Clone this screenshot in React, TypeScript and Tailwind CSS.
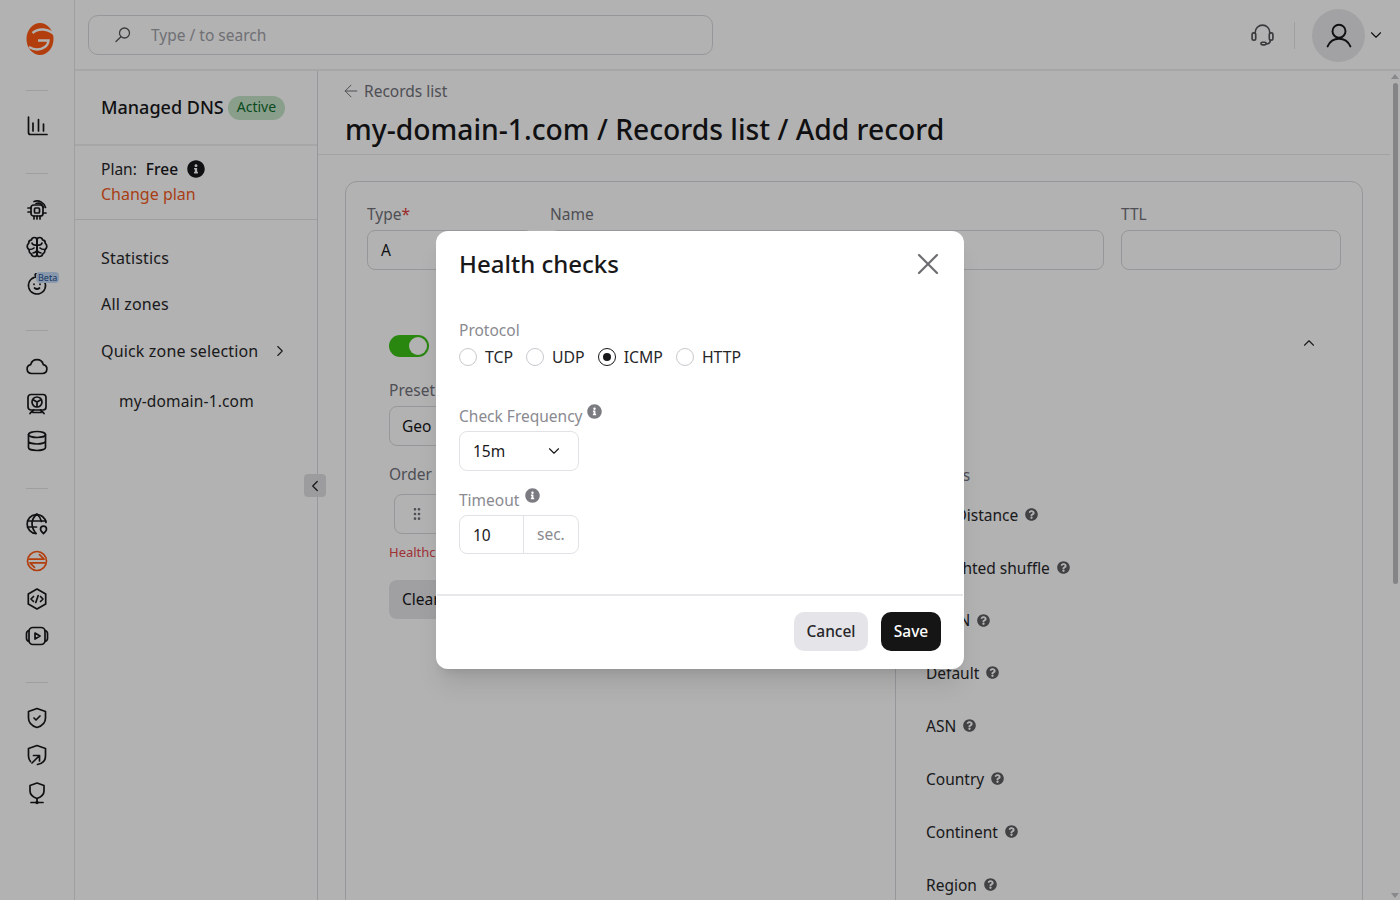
import type { ReactNode } from "react";
import { ArrowLeft, ChevronDown, ChevronLeft, ChevronRight, ChevronUp, GripVertical, X } from "lucide-react";
import { FaInfoCircle, FaQuestionCircle } from "react-icons/fa";

// 24x24 outline used by every rail icon
function RailIcon({ children, active }: { children: ReactNode; active?: boolean }) {
  return (
    <div className={`h-[37.5px] pt-px flex items-center justify-center ${active ? "text-[#ff5a14]" : "text-[#18181b]"}`}>
      <svg viewBox="0 0 24 24" className="w-6 h-6" fill="none" stroke="currentColor" strokeWidth="1.7" strokeLinecap="round" strokeLinejoin="round">
        {children}
      </svg>
    </div>
  );
}

function RailDivider({ className }: { className: string }) {
  return <div className={`w-[22px] h-px bg-[#e4e4e7] ${className}`}></div>;
}

function Logo() {
  return (
    <svg viewBox="0 0 28 32" className="w-7 h-8 mt-[23px] ml-[5px]">
      <ellipse cx="14" cy="16" rx="13.500" ry="16" fill="#ff5a14" />
      <path fill="none" stroke="#ffffff" strokeWidth="2.400" d="M29 12C22 5 12 5 6.500 10" />
      <path fill="none" stroke="#ffffff" strokeWidth="2.400" d="M12 17.500H22.500C22 23 17 26.500 11 26.500 8 26.500 5.500 25.500 3 24" />
    </svg>
  );
}

function QuestionItem({ label }: { label: string }) {
  return (
    <div className="h-[52.85px] flex items-center gap-[7px] text-[15.5px] text-[#27272a]">
      <span>{label}</span>
      <FaQuestionCircle className="w-[13px] h-[13px] text-[#5f5f64] -mt-0.5" />
    </div>
  );
}

function Radio({ label, checked }: { label: string; checked?: boolean }) {
  return (
    <div className="flex items-center gap-2">
      <span className={`w-[18px] h-[18px] rounded-full border flex items-center justify-center ${checked ? "border-[#18181b]" : "border-[#c9c9ce]"}`}>
        {checked && <span className="w-2 h-2 rounded-full bg-[#18181b]"></span>}
      </span>
      <span className="text-[15.8px] leading-5 text-[#27272a]">{label}</span>
    </div>
  );
}

export default function App() {
  return (
    <div className="relative w-full h-screen flex overflow-hidden bg-white text-[#18181b] font-['Noto_Sans',sans-serif]">
      {/* Left icon rail */}
      <aside className="w-[75px] shrink-0 border-r border-[#e4e4e7] flex flex-col items-center">
        <Logo />
        <RailDivider className="mt-[35px]" />
        <div className="mt-4 w-full">
          <RailIcon>
            <path d="M3.500 3v15.500a2 2 0 0 0 2 2H22" />
            <path d="M8 9v8M13.500 5.500V17M18.500 10v7" />
          </RailIcon>
        </div>
        <RailDivider className="mt-[28px]" />
        <div className="mt-[17px] w-full">
          <RailIcon>
            <rect x="6" y="7" width="12" height="11" rx="2.500" />
            <rect x="9.500" y="10" width="5" height="5" rx="1" />
            <path d="M3 10h3M3 14h3M18 15h3M9 18v3M12 18v3M15 18v3M9 3.500c5-2 10 1 11.500 6M11 5.500c3-1 6 .5 7.500 4" />
          </RailIcon>
          <RailIcon>
            <path d="M12 5C12 3.300 10.700 2.500 9.300 2.500 7.800 2.500 6.700 3.500 6.500 4.800 4.800 5 3.600 6.400 3.800 8.200 2.500 9.300 2 10.600 2.300 12c.2 1.300 1 2.300 1.900 2.800-.3 1.700.3 3.200 1.900 4 .5 1.700 1.800 2.700 3.400 2.700 1.500 0 2.500-1 2.500-2.500z" />
            <path d="M12 5C12 3.300 13.300 2.500 14.700 2.500 16.200 2.500 17.300 3.500 17.500 4.800 19.200 5 20.400 6.400 20.200 8.200 21.500 9.300 22 10.600 21.700 12c-.2 1.300-1 2.300-1.900 2.800.3 1.700-.3 3.200-1.900 4-.5 1.700-1.800 2.700-3.400 2.700-1.500 0-2.500-1-2.500-2.500z" />
            <path d="M12 5v14.500M7 8c.5 1.500 2.500 2.500 5 2M17 8c-.5 1.500-2.500 2.500-5 2M4.500 14.500c2.500 0 4-1 4.500-1.500M19.500 14.500c-2.500 0-4-1-4.500-1.500M8 18c1.500-.2 3-1 4-2.500M16 18c-1.500-.2-3-1-4-2.500" />
          </RailIcon>
          <div className="relative">
            <RailIcon>
              <g transform="translate(0 -1.500)">
                <circle cx="12" cy="14" r="8.500" strokeDasharray="3 1.200" />
                <path d="M12 5.500C9.500 5 9.500 2 12 2" />
                <path d="M9 12.500v.5M15 12.500v.5M9.500 16.500c1.500 1.200 3.500 1.200 5 0" />
              </g>
            </RailIcon>
            <span className="absolute left-[36px] top-[6px] h-[11px] px-[2px] rounded-[4px] bg-[#c5dcf5] text-[#1d4f91] text-[9px] leading-[11px]">Beta</span>
          </div>
        </div>
        <RailDivider className="mt-[27px]" />
        <div className="mt-4 w-full">
          <RailIcon>
            <path d="M6.500 19.500a4.500 4.500 0 0 1-.8-8.900 6.500 6.500 0 0 1 12.600 0 4.500 4.500 0 0 1-.8 8.900z" />
          </RailIcon>
          <RailIcon>
            <rect x="3" y="2.500" width="18" height="15.500" rx="3" />
            <circle cx="12" cy="10" r="5" />
            <path d="M12 10l-3.500-2M12 10l3.500-2M12 10v4.500" />
            <path d="M5 21.500c1.500-2 3-2.500 3.500-3.500M19 21.500c-1.500-2-3-2.500-3.500-3.500M8 20.500h8" />
          </RailIcon>
          <RailIcon>
            <ellipse cx="12" cy="5.500" rx="8.500" ry="3" />
            <path d="M3.500 5.500v13c0 1.700 3.800 3 8.500 3s8.500-1.300 8.500-3v-13M3.500 12c0 1.700 3.800 3 8.500 3s8.500-1.300 8.500-3" />
          </RailIcon>
        </div>
        <RailDivider className="mt-[28px]" />
        <div className="mt-4 w-full">
          <RailIcon>
            <path d="M21 10.500A9.500 9.500 0 1 0 11 21.500" />
            <path d="M2.500 9h18.500M2.500 15h9M12 2c-3.500 3-5 6-5 9.500s1.500 7 4 10M12 2c2.500 2.500 4 5 4.500 7.500" />
            <path d="M18.500 21.500c-2-1.800-3-3-3-4.300a3 3 0 0 1 6 0c0 1.300-1 2.500-3 4.300z" />
          </RailIcon>
          <RailIcon active>
            <circle cx="12" cy="12" r="9.500" />
            <path d="M4 10.200h15l-4.500-4.500M20 13.800H5l4.500 4.500" />
          </RailIcon>
          <RailIcon>
            <path d="M12 2l8.700 5v10L12 22l-8.700-5V7z" />
            <path d="M8.500 9.500L6 12l2.500 2.500M15.500 9.500L18 12l-2.500 2.500M13.200 8.500l-2.400 7" />
          </RailIcon>
          <RailIcon>
            <rect x="4" y="3.500" width="16" height="17" rx="4" />
            <path d="M4 6.500c-1.500.5-2.500 1.500-2.500 3v5c0 1.500 1 2.500 2.500 3M20 6.500c1.500.5 2.500 1.500 2.500 3v5c0 1.500-1 2.500-2.500 3" />
            <path d="M10 9l5 3-5 3z" />
          </RailIcon>
        </div>
        <RailDivider className="mt-[27px]" />
        <div className="mt-4 w-full">
          <RailIcon>
            <path d="M12 2.500l8.500 3v6.500c0 5-3.500 8-8.500 9.500-5-1.500-8.500-4.500-8.500-9.500V5.500z" />
            <path d="M9 12l2 2 4-4" />
          </RailIcon>
          <RailIcon>
            <path d="M5.500 18.500C4 16.800 3.500 15 3.500 13V5.500l8.500-3 8.500 3V13c0 4.500-3 7.500-8 8.500" />
            <path d="M7 20l7-7M8.500 12.500H14.500V18" />
          </RailIcon>
          <RailIcon>
            <path d="M12 2l7 2.500V10c0 3.500-3 6-7 7.500C8 16 5 13.500 5 10V4.500z" />
            <path d="M12 17.500V21.500M6 21.500h12" />
            <circle cx="12" cy="21.500" r=".8" />
          </RailIcon>
        </div>
      </aside>

      <div className="flex-1 min-w-0 flex flex-col">
        {/* Top bar */}
        <header className="h-[71px] shrink-0 border-b-2 border-[#eeeeef] flex items-center pl-[13px] pt-px">
          <div className="w-[625px] h-10 rounded-[10px] border border-[#d9d9de] flex items-center pl-[24px]">
            <svg viewBox="0 0 20 20" className="w-5 h-5 text-[#55555a]" fill="none" stroke="currentColor" strokeWidth="1.3" strokeLinecap="round">
              <circle cx="11.500" cy="8" r="5" />
              <path d="M8 11.800L3 16.500" />
            </svg>
            <span className="ml-[18px] mt-[2px] text-[15.5px] text-[#a1a1a8]">Type / to search</span>
          </div>
          <div className="ml-auto flex items-center">
            <svg viewBox="0 0 24 24" className="w-[25px] h-[25px] text-[#55555a]" fill="none" stroke="currentColor" strokeWidth="1.6" strokeLinecap="round" strokeLinejoin="round">
              <path d="M5 10V9a7 7 0 0 1 14 0v1" />
              <rect x="2" y="9.500" width="3.500" height="7" rx="1.500" />
              <rect x="18.500" y="9.500" width="3.500" height="7" rx="1.500" />
              <path d="M19.500 16.500c0 2-1.500 3.500-4 3.500" />
              <rect x="10.500" y="18.500" width="5" height="2.500" rx="1.250" />
            </svg>
            <div className="w-px h-[27px] bg-[#e4e4e7] ml-[19px]"></div>
            <div className="ml-[17px] w-[53px] h-[53px] rounded-full bg-[#e9e9ec] flex items-center justify-center">
              <svg viewBox="0 0 24 24" className="w-[26px] h-[26px] text-[#18181b]" fill="none" stroke="currentColor" strokeWidth="1.8" strokeLinecap="round">
                <circle cx="12" cy="8.500" r="6" />
                <path d="M1.500 22.500c2-4.500 5.500-7 10.500-7s8.500 2.500 10.500 7" />
              </svg>
            </div>
            <ChevronDown className="w-[18px] h-[18px] ml-[2px] mr-[15px] text-[#18181b]" strokeWidth={1.5} />
          </div>
        </header>

        <div className="flex-1 min-h-0 flex">
          {/* Sidebar */}
          <nav className="relative w-[243px] shrink-0 border-r border-[#d9d9de]">
            <div className="h-[75px] border-b-2 border-[#eeeeef] flex items-center pl-[26px] pr-2">
              <span className="text-[18px] font-medium">Managed DNS</span>
              <span className="ml-[4px] h-6 px-[9px] rounded-full bg-[#c4e4c9] text-[#0f6b2c] text-[14px] leading-[22px]">Active</span>
            </div>
            <div className="h-[74px] border-b border-[#e4e4e7] pl-[26px] pt-[12px] text-[15.5px] leading-[22px]">
              <div className="flex items-center">
                <span className="text-[#27272a]">Plan:</span>
                <span className="ml-[9px] font-medium">Free</span>
                <FaInfoCircle className="w-[18px] h-[18px] ml-[9px]" />
              </div>
              <div className="mt-[3px] text-[16px] text-[#f25a1d]">Change plan</div>
            </div>
            <ul className="pt-[15px] pl-[26px] text-[16px] tracking-[0.01em] text-[#27272a]">
              <li className="h-[46px] flex items-center">Statistics</li>
              <li className="h-[46px] flex items-center">All zones</li>
              <li className="h-[46px] mt-px flex items-center">
                Quick zone selection
                <ChevronRight className="w-[18px] h-[18px] ml-[13px]" strokeWidth={1.5} />
              </li>
              <li className="h-[46px] mt-[5px] flex items-center pl-[18px] text-[15.5px]">my-domain-1.com</li>
            </ul>
            <button className="absolute left-[229px] top-[403px] w-[22px] h-[23px] rounded-[4px] bg-[#e0e0e4] flex items-center justify-center">
              <ChevronLeft className="w-[18px] h-[18px] text-[#27272a]" strokeWidth={1.8} />
            </button>
          </nav>

          {/* Main */}
          <main className="flex-1 min-w-0 overflow-hidden">
            <div className="h-[84px] border-b border-[#e9e9ec] pl-[27px] pt-[10px]">
              <div className="flex items-center gap-[3px] text-[15.5px] leading-5 text-[#71717a]">
                <ArrowLeft className="w-5 h-5 -ml-1" strokeWidth={1.2} />
                Records list
              </div>
              <h1 className="mt-[9px] text-[28.25px] leading-[38px] font-medium">my-domain-1.com / Records list / Add record</h1>
            </div>
            <section className="mt-[26px] ml-[27px] mr-[27px] h-[900px] rounded-[12px] border border-[#d9d9de] px-[21px] pt-[22px]">
              <div className="flex gap-[17px] text-[15.5px]">
                <div className="w-[166px]">
                  <div className="leading-5 text-[#71717a]">Type<span className="text-[#e03c3c]">*</span></div>
                  <div className="mt-[6px] h-10 rounded-lg border border-[#d9d9de] flex items-center pl-[13px] pt-[2px]">A</div>
                </div>
                <div className="flex-1">
                  <div className="leading-5 text-[#71717a]">Name</div>
                  <div className="mt-[6px] h-10 rounded-lg border border-[#d9d9de]"></div>
                </div>
                <div className="w-[220px]">
                  <div className="leading-5 text-[#71717a]">TTL</div>
                  <div className="mt-[6px] h-10 rounded-lg border border-[#d9d9de]"></div>
                </div>
              </div>

              <div className="mt-[65px] ml-[22px] mr-[23px] flex items-start justify-between">
                <div className="w-10 h-[22px] rounded-full bg-[#3bc016] flex items-center justify-end pr-[2px]">
                  <span className="w-[18px] h-[18px] rounded-full bg-white"></span>
                </div>
                <ChevronUp className="w-[18px] h-[18px] -mt-[1px] text-[#27272a]" strokeWidth={1.5} />
              </div>

              <div className="mt-[23px] ml-[22px] flex text-[15.5px]">
                <div className="w-[506px] shrink-0">
                  <div className="leading-5 text-[#71717a]">Preset</div>
                  <div className="mt-[6px] w-[300px] h-10 rounded-lg border border-[#d9d9de] flex items-center pl-[12px] pt-[2px]">Geo</div>
                  <div className="mt-[18px] leading-5 text-[#71717a]">Order</div>
                  <div className="mt-[10px] ml-[5px] w-[300px] h-10 rounded-lg border border-[#d9d9de] flex items-center pl-[14px]">
                    <GripVertical className="w-4 h-4 text-[#71717a]" strokeWidth={2} />
                  </div>
                  <div className="mt-[10px] text-[13px] leading-4 text-[#e5484d]">Healthchecks</div>
                  <div className="mt-[20px] w-[120px] h-[39px] rounded-lg bg-[#e5e5ea] flex items-center pl-[13px]">Clear all</div>
                </div>
                <div className="flex-1 border-l border-[#d9d9de] pl-[30px] pt-[85px] mb-[-200px]">
                  <div className="leading-5 text-[#71717a]">Filters</div>
                  <div className="mt-[4px]">
                    <QuestionItem label="GeoDistance" />
                    <QuestionItem label="Weighted shuffle" />
                    <QuestionItem label="GCDN" />
                    <QuestionItem label="Default" />
                    <QuestionItem label="ASN" />
                    <QuestionItem label="Country" />
                    <QuestionItem label="Continent" />
                    <QuestionItem label="Region" />
                  </div>
                </div>
              </div>
            </section>
          </main>

          {/* Page scrollbar */}
          <div className="w-[10px] shrink-0 flex flex-col items-center bg-white">
            <div className="mt-[3px] w-0 h-0 border-x-[4px] border-x-transparent border-b-[5px] border-b-[#c4c4c8]"></div>
            <div className="mt-[4px] w-[5px] h-[501px] rounded-full bg-[#bdbdc2]"></div>
            <div className="mt-auto mb-[2px] w-0 h-0 border-x-[4px] border-x-transparent border-t-[5px] border-t-[#c4c4c8]"></div>
          </div>
        </div>
      </div>

      {/* Dialog overlay */}
      <div className="absolute inset-0 bg-black/30 flex items-center justify-center">
        <div className="w-[528px] h-[438px] rounded-[12px] bg-white shadow-xl flex flex-col">
          <div className="flex items-center justify-between pl-[23px] pr-[18px] pt-[15px]">
            <h2 className="text-[24px] leading-9 font-medium">Health checks</h2>
            <X className="w-9 h-9 text-[#6b6b70]" strokeWidth={1.4} />
          </div>
          <div className="pl-[23px] pt-[38px] text-[15.5px] flex-1">
            <div className="leading-5 text-[#8a8a90]">Protocol</div>
            <div className="mt-[7px] flex gap-[13px]">
              <Radio label="TCP" />
              <Radio label="UDP" />
              <Radio label="ICMP" checked />
              <Radio label="HTTP" />
            </div>
            <div className="mt-[38px] flex items-start">
              <span className="mt-[1px] leading-5 text-[#8a8a90]">Check Frequency</span>
              <FaInfoCircle className="w-[15px] h-[15px] ml-[4px] -mt-[1px] text-[#7b7b82]" />
            </div>
            <div className="mt-[5px] w-[120px] h-10 rounded-lg border border-[#e2e2e6] flex items-center justify-between pl-[13px] pr-[15px]">
              <span className="mt-[2px]">15m</span>
              <ChevronDown className="w-[18px] h-[18px]" strokeWidth={1.5} />
            </div>
            <div className="mt-[18px] flex items-start">
              <span className="mt-[1px] leading-5 text-[#8a8a90]">Timeout</span>
              <FaInfoCircle className="w-[15px] h-[15px] ml-[6px] -mt-[1px] text-[#7b7b82]" />
            </div>
            <div className="mt-[5px] w-[120px] h-[39px] rounded-lg border border-[#e2e2e6] flex items-center">
              <div className="w-[64px] h-full border-r border-[#e2e2e6] flex items-center pl-[13px] pt-[2px]">10</div>
              <div className="pl-[13px] pt-[1px] text-[#8a8a90]">sec.</div>
            </div>
          </div>
          <div className="h-[75px] mx-px border-t-2 border-[#e8e8ea] flex items-start justify-end gap-[13px] pt-[16px] pr-[22px] text-[15.5px]">
            <button className="w-[74px] h-[39px] rounded-[10px] bg-[#e5e4e9] font-medium text-[#27272a]">Cancel</button>
            <button className="w-[60px] h-[39px] rounded-[10px] bg-[#151515] font-medium text-white">Save</button>
          </div>
        </div>
      </div>
    </div>
  );
}
